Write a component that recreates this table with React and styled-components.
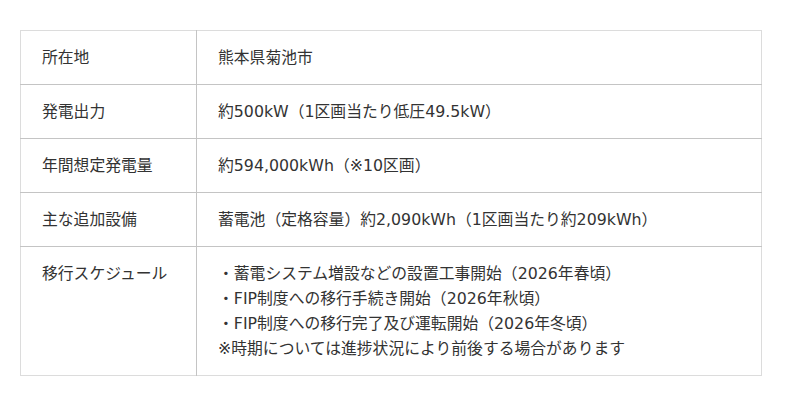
import React from "react";
import styled, { createGlobalStyle } from "styled-components";

const GlobalStyle = createGlobalStyle`
  body {
    margin: 0;
    background: #fff;
    font-family: "DejaVu Sans", "Noto Sans CJK JP", sans-serif;
  }
`;

const Wrapper = styled.div`
  padding: 30px 0 0 20px;
`;

const Table = styled.table`
  width: 742px;
  border-collapse: collapse;
  border: 1px solid #dcdcdc;
  font-size: 15.8px;
  line-height: 25px;
  color: #333;
`;

const Row = styled.tr`
  border-bottom: 1px solid #c4c4c4;

  &:last-child {
    border-bottom: 1px solid #dcdcdc;
  }
`;

const Label = styled.th`
  width: 154px;
  padding: 14px 0 14px 21px;
  text-align: left;
  vertical-align: top;
  font-weight: normal;
  border-right: 1px solid #c4c4c4;
`;

const Value = styled.td`
  padding: 14px 21px;
  vertical-align: top;
`;

const Line = styled.div`
  white-space: nowrap;
`;

const rows = [
  { label: "所在地", lines: ["熊本県菊池市"] },
  { label: "発電出力", lines: ["約500kW（1区画当たり低圧49.5kW）"] },
  { label: "年間想定発電量", lines: ["約594,000kWh（※10区画）"] },
  { label: "主な追加設備", lines: ["蓄電池（定格容量）約2,090kWh（1区画当たり約209kWh）"] },
  {
    label: "移行スケジュール",
    lines: [
      "・蓄電システム増設などの設置工事開始（2026年春頃）",
      "・FIP制度への移行手続き開始（2026年秋頃）",
      "・FIP制度への移行完了及び運転開始（2026年冬頃）",
      "※時期については進捗状況により前後する場合があります",
    ],
  },
];

export default function App() {
  return (
    <>
      <GlobalStyle />
      <Wrapper>
        <Table>
          <tbody>
            {rows.map((row) => (
              <Row key={row.label}>
                <Label>{row.label}</Label>
                <Value>
                  {row.lines.map((line) => (
                    <Line key={line}>{line}</Line>
                  ))}
                </Value>
              </Row>
            ))}
          </tbody>
        </Table>
      </Wrapper>
    </>
  );
}
